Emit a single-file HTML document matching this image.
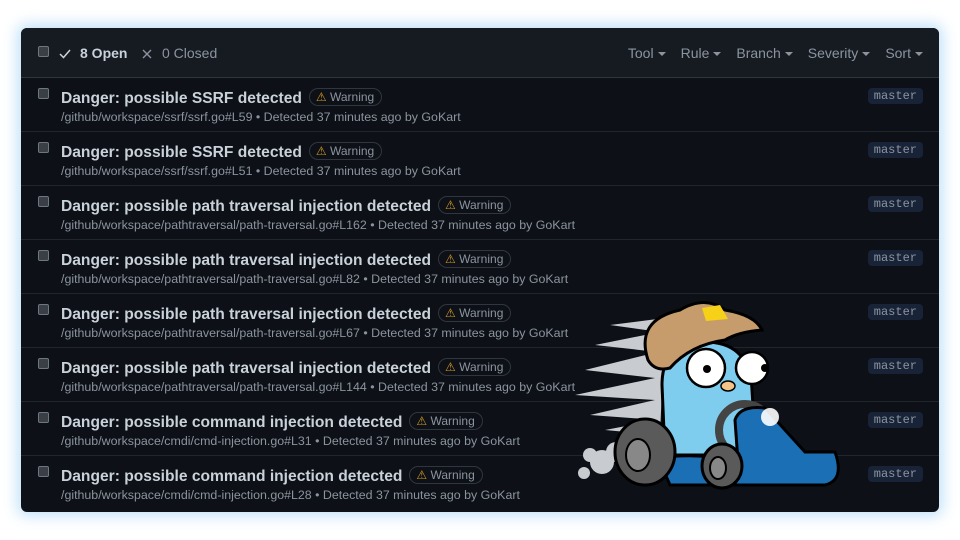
<!DOCTYPE html>
<html><head><meta charset="utf-8"><style>
*{margin:0;padding:0;box-sizing:border-box}
body{width:960px;height:540px;background:#fff;font-family:"Liberation Sans",sans-serif;position:relative;overflow:hidden}
.panel{position:absolute;left:21px;top:28px;width:918px;height:484px;background:#0d1117;border-radius:6px;box-shadow:0 0 14px 4px rgba(120,190,240,.45);overflow:hidden}
.hdr{height:50px;background:#161b22;border-bottom:1px solid #30363d;position:relative;color:#8b949e;font-size:14px}
.cb{position:absolute;width:11px;height:11px;border:1px solid #6e7681;background:#3a3f46;border-radius:2px}
.hdr .open{position:absolute;left:38px;top:17px;color:#c9d1d9;font-weight:bold}
.hdr .closed{position:absolute;left:120px;top:17px}
.filters{position:absolute;right:16px;top:17px;display:flex;gap:15px}
.filters span:after{content:"";display:inline-block;margin-left:4px;vertical-align:middle;border-left:4px solid transparent;border-right:4px solid transparent;border-top:4px solid #8b949e}
.row{height:54px;border-bottom:1px solid #21262d;position:relative}
.row .cb{left:17px;top:10px}
.t{position:absolute;left:40px;top:10px;color:#c9d1d9;font-weight:bold;font-size:15.6px;white-space:nowrap}
.w{display:inline-block;margin-left:7px;font-weight:normal;font-size:12px;color:#8b949e;border:1px solid #30363d;border-radius:10px;padding:1px 7px 1px 6px;vertical-align:2px}
.w b{color:#d29922;font-weight:normal}
.s{position:absolute;left:40px;top:32px;font-size:12.4px;color:#8b949e;white-space:nowrap}
.m{position:absolute;right:16px;top:10px;background:#182338;color:#8b949e;font-family:"Liberation Mono",monospace;font-size:12px;padding:1px 6px;border-radius:4px}
</style></head><body>
<div class="panel">
<div class="hdr"><div class="cb" style="left:17px;top:18px"></div>
<svg style="position:absolute;left:38px;top:21px" width="12" height="10"><path d="M1 5l3.5 3.5L11 1" stroke="#c9d1d9" stroke-width="1.5" fill="none"/></svg>
<span class="open" style="left:59px">8 Open</span>
<svg style="position:absolute;left:121px;top:21px" width="10" height="10"><path d="M1 1l8 8M9 1l-8 8" stroke="#8b949e" stroke-width="1.4"/></svg>
<span class="closed" style="left:141px">0 Closed</span>
<div class="filters"><span>Tool</span><span>Rule</span><span>Branch</span><span>Severity</span><span>Sort</span></div>
</div>
<div class="row"><div class="cb"></div><div class="t">Danger: possible SSRF detected<span class="w"><b>⚠</b> Warning</span></div><div class="s">/github/workspace/ssrf/ssrf.go#L59 • Detected 37 minutes ago by GoKart</div><div class="m">master</div></div>
<div class="row"><div class="cb"></div><div class="t">Danger: possible SSRF detected<span class="w"><b>⚠</b> Warning</span></div><div class="s">/github/workspace/ssrf/ssrf.go#L51 • Detected 37 minutes ago by GoKart</div><div class="m">master</div></div>
<div class="row"><div class="cb"></div><div class="t">Danger: possible path traversal injection detected<span class="w"><b>⚠</b> Warning</span></div><div class="s">/github/workspace/pathtraversal/path-traversal.go#L162 • Detected 37 minutes ago by GoKart</div><div class="m">master</div></div>
<div class="row"><div class="cb"></div><div class="t">Danger: possible path traversal injection detected<span class="w"><b>⚠</b> Warning</span></div><div class="s">/github/workspace/pathtraversal/path-traversal.go#L82 • Detected 37 minutes ago by GoKart</div><div class="m">master</div></div>
<div class="row"><div class="cb"></div><div class="t">Danger: possible path traversal injection detected<span class="w"><b>⚠</b> Warning</span></div><div class="s">/github/workspace/pathtraversal/path-traversal.go#L67 • Detected 37 minutes ago by GoKart</div><div class="m">master</div></div>
<div class="row"><div class="cb"></div><div class="t">Danger: possible path traversal injection detected<span class="w"><b>⚠</b> Warning</span></div><div class="s">/github/workspace/pathtraversal/path-traversal.go#L144 • Detected 37 minutes ago by GoKart</div><div class="m">master</div></div>
<div class="row"><div class="cb"></div><div class="t">Danger: possible command injection detected<span class="w"><b>⚠</b> Warning</span></div><div class="s">/github/workspace/cmdi/cmd-injection.go#L31 • Detected 37 minutes ago by GoKart</div><div class="m">master</div></div>
<div class="row" style="border:0"><div class="cb"></div><div class="t">Danger: possible command injection detected<span class="w"><b>⚠</b> Warning</span></div><div class="s">/github/workspace/cmdi/cmd-injection.go#L28 • Detected 37 minutes ago by GoKart</div><div class="m">master</div></div>
</div>
<svg style="position:absolute;left:570px;top:290px" width="280" height="210" viewBox="0 0 280 210">
<g fill="#c8cbd0">
<path d="M95 28L40 35L90 42L25 55L88 62L15 80L85 88L5 105L85 110L20 125L88 130L35 140L90 145z"/>
<circle cx="32" cy="172" r="12"/><circle cx="20" cy="165" r="7"/><circle cx="14" cy="183" r="6"/><circle cx="46" cy="162" r="10"/>
</g>
<path d="M92 95 Q92 52 135 52 Q180 52 182 100 L186 165 L95 165z" fill="#7fcdee" stroke="#000" stroke-width="3"/>
<path d="M78 70 Q65 30 110 20 Q135 5 155 20 Q185 25 192 40 Q168 42 155 50 Q120 55 100 78 Q85 82 78 70z" fill="#c69c6d" stroke="#000" stroke-width="3"/>
<path d="M132 18l18-3 8 14-22 2z" fill="#f7d117"/>
<circle cx="136" cy="78" r="19" fill="#fff" stroke="#000" stroke-width="2.5"/><circle cx="137" cy="79" r="4" fill="#000"/>
<circle cx="182" cy="78" r="16" fill="#fff" stroke="#000" stroke-width="2.5"/><circle cx="195" cy="78" r="4" fill="#000"/>
<ellipse cx="158" cy="96" rx="7" ry="5" fill="#f2c48a" stroke="#000" stroke-width="1.5"/>
<circle cx="175" cy="140" r="26" fill="none" stroke="#444" stroke-width="8"/>
<path d="M165 130 Q170 115 195 118 Q215 140 235 162 L265 162 Q275 190 255 195 L100 195 L88 168 Q130 162 168 172z" fill="#1a6fb5" stroke="#000" stroke-width="3"/>
<circle cx="200" cy="127" r="9" fill="#fff" opacity=".9"/>
<ellipse cx="75" cy="162" rx="30" ry="33" fill="#5a5a5a" stroke="#000" stroke-width="3"/><ellipse cx="68" cy="165" rx="12" ry="16" fill="#888" stroke="#000" stroke-width="2"/>
<ellipse cx="152" cy="176" rx="20" ry="22" fill="#5a5a5a" stroke="#000" stroke-width="3"/><ellipse cx="148" cy="178" rx="8" ry="11" fill="#888" stroke="#000" stroke-width="2"/>
</svg>
</body></html>
